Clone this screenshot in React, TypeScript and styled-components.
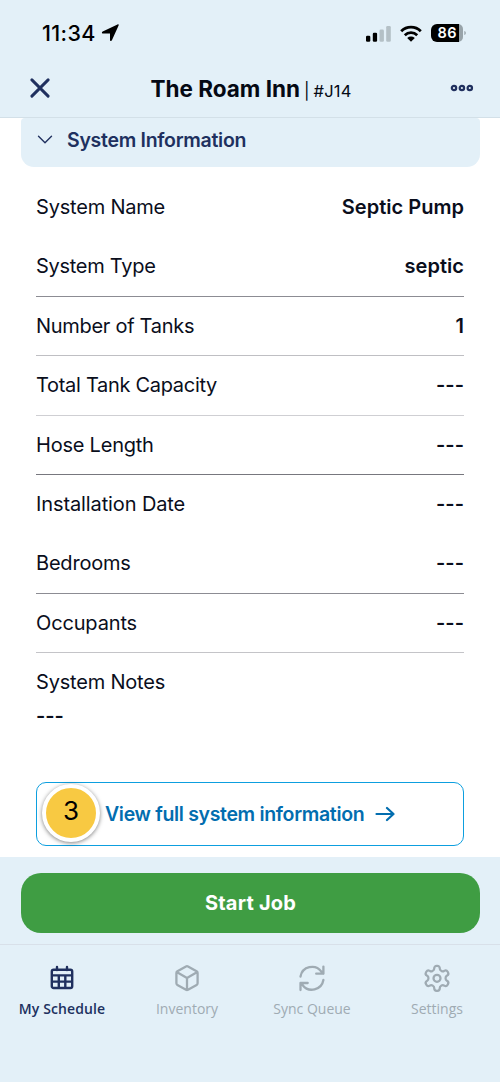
import React from "react";
import styled, { createGlobalStyle } from "styled-components";

const Global = createGlobalStyle`
  * { box-sizing: border-box; }
  body { margin: 0; background: #fff; }
  button { font: inherit; border: 0; background: none; padding: 0; margin: 0; }
`;

const Screen = styled.div`
  width: 500px;
  height: 1082px;
  display: flex;
  flex-direction: column;
  overflow: hidden;
  background: #fff;
  color: #0a0e1c;
  font-family: Inter, "Liberation Sans", sans-serif;
`;

const Text = styled.span<{ $size: number; $weight?: number; $track?: number; $color?: string }>`
  font-size: ${(p) => p.$size}px;
  font-weight: ${(p) => p.$weight ?? 400};
  letter-spacing: ${(p) => p.$track ?? 0}px;
  color: ${(p) => p.$color ?? "inherit"};
  white-space: nowrap;
`;

const Top = styled.header`
  flex: none;
  height: 118px;
  background: #e3f0f8;
  border-bottom: 1px solid #d3e0e8;
`;

const StatusBar = styled.div`
  height: 66px;
  display: flex;
  align-items: center;
  justify-content: space-between;
  padding: 0 34px 0 42px;
  color: #000;
`;

const Group = styled.div<{ $gap: number }>`
  display: flex;
  align-items: center;
  gap: ${(p) => p.$gap}px;
`;

const TitleBar = styled.div`
  height: 45px;
  display: grid;
  grid-template-columns: 30px 1fr 30px;
  align-items: center;
  padding: 0 23px 1px 25px;
`;

const Title = styled.h1`
  margin: 0;
  display: flex;
  justify-content: center;
  align-items: baseline;
  gap: 4px;
  color: #050914;
`;

const IconButton = styled.button`
  display: flex;
  justify-content: center;
`;

const Section = styled.section`
  flex: 1;
  padding: 0 20px;
`;

const SectionHeader = styled.div`
  height: 49px;
  margin: 0 0 11px 1px;
  width: 459px;
  padding: 0 16px 6px;
  display: flex;
  align-items: center;
  gap: 14px;
  background: #e3f0f8;
  border-radius: 4px 4px 13px 13px;
`;

const Details = styled.div`
  padding: 0 16px;
`;

const Row = styled.div<{ $height: number; $line?: string }>`
  height: ${(p) => p.$height}px;
  padding-top: 17px;
  display: flex;
  align-items: flex-start;
  justify-content: space-between;
  border-bottom: 1px solid ${(p) => p.$line ?? "transparent"};
  line-height: 24px;
`;

const Notes = styled.div`
  height: 129px;
  padding-top: 16px;
  display: flex;
  flex-direction: column;
  gap: 8px;
  line-height: 26px;
`;

const ViewButton = styled.button`
  position: relative;
  width: 428px;
  height: 64px;
  padding: 0 0 1px 68px;
  display: flex;
  align-items: center;
  gap: 11px;
  border: 1.4px solid #0d9fdf;
  border-radius: 10px;
`;

const StepBadge = styled.span`
  position: absolute;
  left: 5px;
  top: 1px;
  width: 58px;
  height: 58px;
  display: flex;
  align-items: center;
  justify-content: center;
  padding-bottom: 6px;
  border: 4px solid #fff;
  border-radius: 50%;
  background: #f8c942;
  box-shadow: 0 1px 4px rgba(0, 0, 0, 0.5);
  color: #000;
`;

const Footer = styled.footer`
  flex: none;
  height: 225px;
  background: #e3f0f8;
`;

const StartArea = styled.div`
  height: 88px;
  padding: 16px 20px 0 21px;
  border-bottom: 1px solid #d8e0e9;
`;

const StartButton = styled.button`
  width: 459px;
  height: 60px;
  border-radius: 20px;
  background: #3f9d43;
  color: #fff;
`;

const Tabs = styled.nav`
  display: grid;
  grid-template-columns: repeat(4, 125px);
`;

const Tab = styled.div<{ $active?: boolean }>`
  padding: 19px 1px 0 0;
  display: flex;
  flex-direction: column;
  align-items: center;
  gap: 4px;
  color: ${(p) => (p.$active ? "#20305f" : "#9fabb3")};
  font-family: "Open Sans", "Noto Sans", sans-serif;
  line-height: 22px;
`;

const CalendarIcon = () => (
  <svg width="30" height="30" viewBox="0 0 30 30" fill="none" stroke="currentColor" strokeWidth="2.4">
    <rect x="4.8" y="5.8" width="20.4" height="18.2" rx="1.8" />
    <path d="M4.8 11.4h20.4M4.8 17.6h20.4M11.8 11.4v12.6M18.3 11.4v12.6" />
    <path d="M10 6V3M20 6V3" strokeLinecap="round" />
  </svg>
);

const BoxIcon = () => (
  <svg width="30" height="30" viewBox="0 0 30 30" fill="none" stroke="currentColor" strokeWidth="2.3" strokeLinejoin="round">
    <path d="M16 2.4l8.600 4.900a2 2 0 0 1 1 1.700v10.200a2 2 0 0 1-1 1.700L16 25.800a2 2 0 0 1-2 0l-8.600-4.900a2 2 0 0 1-1-1.700V9a2 2 0 0 1 1-1.700L14 2.400a2 2 0 0 1 2 0zM4.700 8.100L15 14l10.300-5.900M15 14v12" />
  </svg>
);

const SyncIcon = () => (
  <svg width="30" height="30" viewBox="0 0 30 30" fill="none" stroke="currentColor" strokeWidth="2.3" strokeLinecap="round" strokeLinejoin="round">
    <path d="M3.500 12.500A11.700 11.700 0 0 1 24.400 7.600l2 2.100M26.400 2.600v7.100h-7.200M26.400 16A11.700 11.700 0 0 1 5.500 21L3.500 19M3.500 26v-7h7.200" />
  </svg>
);

const GearIcon = () => (
  <svg width="30" height="30" viewBox="0 0 24 24" fill="none" stroke="currentColor" strokeWidth="1.8" strokeLinecap="round" strokeLinejoin="round">
    <g transform="translate(0 -0.6)">
      <path d="M12.220 2h-.44a2 2 0 0 0-2 2v.18a2 2 0 0 1-1 1.730l-.43.25a2 2 0 0 1-2 0l-.15-.08a2 2 0 0 0-2.730.73l-.22.38a2 2 0 0 0 .73 2.730l.15.1a2 2 0 0 1 1 1.720v.51a2 2 0 0 1-1 1.740l-.15.09a2 2 0 0 0-.73 2.730l.22.38a2 2 0 0 0 2.730.73l.15-.08a2 2 0 0 1 2 0l.43.25a2 2 0 0 1 1 1.730V20a2 2 0 0 0 2 2h.44a2 2 0 0 0 2-2v-.18a2 2 0 0 1 1-1.730l.43-.25a2 2 0 0 1 2 0l.15.08a2 2 0 0 0 2.730-.73l.22-.39a2 2 0 0 0-.73-2.730l-.15-.08a2 2 0 0 1-1-1.740v-.5a2 2 0 0 1 1-1.740l.15-.09a2 2 0 0 0 .73-2.730l-.22-.38a2 2 0 0 0-2.730-.73l-.15.08a2 2 0 0 1-2 0l-.43-.25a2 2 0 0 1-1-1.730V4a2 2 0 0 0-2-2z" />
      <circle cx="12" cy="12" r="2.8" />
    </g>
  </svg>
);

const rows = [
  { label: "System Name", value: "Septic Pump", height: 59, track: -0.2 },
  { label: "System Type", value: "septic", height: 60, line: "#8c8c93", track: -0.28 },
  { label: "Number of Tanks", value: "1", height: 59, line: "#bfbfc3", track: -0.29 },
  { label: "Total Tank Capacity", value: "---", height: 60, line: "#cfcfd3", track: -0.3 },
  { label: "Hose Length", value: "---", height: 59, line: "#77777e", track: -0.22 },
  { label: "Installation Date", value: "---", height: 59, track: -0.11 },
  { label: "Bedrooms", value: "---", height: 60, line: "#8c8c93", track: -0.2 },
  { label: "Occupants", value: "---", height: 59, line: "#c4c4c8", track: -0.15 },
];

const tabs = [
  { label: "My Schedule", icon: <CalendarIcon />, active: true },
  { label: "Inventory", icon: <BoxIcon /> },
  { label: "Sync Queue", icon: <SyncIcon /> },
  { label: "Settings", icon: <GearIcon /> },
];

export default function App() {
  return (
    <Screen>
      <Global />
      <Top>
        <StatusBar>
          <Group $gap={5}>
            <Text $size={21.5} $weight={550} $track={0.35}>11:34</Text>
            <svg width="18" height="18" viewBox="0 0 18 18">
              <path d="M16.5.5c.8-.4 1.500.2 1.100 1.100l-6.700 14.700c-.5 1.100-1.900.9-1.900-.4V9.600H2.200C.7 9.600.4 8 1.700 7.400z" fill="#000" />
            </svg>
          </Group>
          <Group $gap={9}>
            <svg width="25" height="17" viewBox="0 0 25 17">
              <rect x="0" y="10.8" width="4.3" height="6" rx="1.2" />
              <rect x="6.8" y="7.8" width="4.3" height="9" rx="1.2" />
              <rect x="13.5" y="4.6" width="4.4" height="12.2" rx="1.3" fill="#b4c0c6" />
              <rect x="20.2" y="1" width="4.6" height="15.8" rx="1.3" fill="#b4c0c6" />
            </svg>
            <svg width="22" height="17" viewBox="0 0 22 17" fill="none" stroke="#000" strokeWidth="2.8">
              <path d="M1.200 6.200a14 14 0 0 1 19.600 0M4.800 10.200a9 9 0 0 1 12.400 0" />
              <path d="M7.200 13.100a5.600 5.600 0 0 1 7.600 0L11 16.800z" fill="#000" stroke="none" />
            </svg>
            <svg width="35" height="18" viewBox="0 0 35 18">
              <path d="M27 0h0a5 5 0 0 1 5 5v8a5 5 0 0 1-5 5z" fill="#98a3a9" />
              <path d="M6 0h22v18H6a6 6 0 0 1-6-6V6a6 6 0 0 1 6-6z" />
              <path d="M33.300 7c2 .5 2 3.500 0 4z" fill="#98a3a9" />
              <text x="16.2" y="14.2" fill="#fff" textAnchor="middle" fontSize="14.5" fontWeight="600" letterSpacing="0.4" fontFamily="Inter">86</text>
            </svg>
          </Group>
        </StatusBar>
        <TitleBar>
          <IconButton aria-label="Close">
            <svg width="20" height="20" viewBox="0 0 20 20" stroke="#20305f" strokeWidth="2.9" strokeLinecap="round">
              <path d="M1.900 1.900l16.200 16.200M18.100 1.900L1.900 18.100" />
            </svg>
          </IconButton>
          <Title>
            <Text $size={22.5} $weight={700}>The Roam Inn</Text>
            <Text $size={16.5}>|</Text>
            <Text $size={16.5} $track={0.2}>#J14</Text>
          </Title>
          <IconButton aria-label="More">
            <svg width="24" height="8" viewBox="0 0 24 8" fill="none" stroke="#20305f" strokeWidth="2.2">
              <circle cx="4" cy="4" r="2.2" />
              <circle cx="11.9" cy="4" r="2.2" />
              <circle cx="19.8" cy="4" r="2.2" />
            </svg>
          </IconButton>
        </TitleBar>
      </Top>
      <Section>
        <SectionHeader>
          <svg width="16" height="9" viewBox="0 0 16 9" fill="none" stroke="#20305f" strokeWidth="1.4" strokeLinecap="round" strokeLinejoin="round">
            <path d="M1.500 1.200L8 7.700l6.500-6.500" />
          </svg>
          <Text $size={19.5} $weight={600} $track={-0.29} $color="#20305f">System Information</Text>
        </SectionHeader>
        <Details>
          {rows.map((r) => (
            <Row key={r.label} $height={r.height} $line={r.line}>
              <Text $size={20} $track={r.track}>{r.label}</Text>
              <Text $size={20} $weight={600} $track={0.03}>{r.value}</Text>
            </Row>
          ))}
          <Notes>
            <Text $size={20} $track={-0.2}>System Notes</Text>
            <Text $size={20} $weight={600}>---</Text>
          </Notes>
          <ViewButton>
            <StepBadge><Text $size={26}>3</Text></StepBadge>
            <Text $size={19.5} $weight={600} $track={-0.33} $color="#026daf">View full system information</Text>
            <svg width="20" height="16" viewBox="0 0 20 16" fill="none" stroke="#026daf" strokeWidth="2.2" strokeLinecap="round" strokeLinejoin="round">
              <path d="M1.500 8h17M12 2l6.500 6-6.500 6" />
            </svg>
          </ViewButton>
        </Details>
      </Section>
      <Footer>
        <StartArea>
          <StartButton><Text $size={20} $weight={700} $track={0.2}>Start Job</Text></StartButton>
        </StartArea>
        <Tabs>
          {tabs.map((t) => (
            <Tab key={t.label} $active={t.active}>
              {t.icon}
              <Text $size={14} $weight={t.active ? 550 : 400} $track={t.active ? 0.1 : 0}>{t.label}</Text>
            </Tab>
          ))}
        </Tabs>
      </Footer>
    </Screen>
  );
}
